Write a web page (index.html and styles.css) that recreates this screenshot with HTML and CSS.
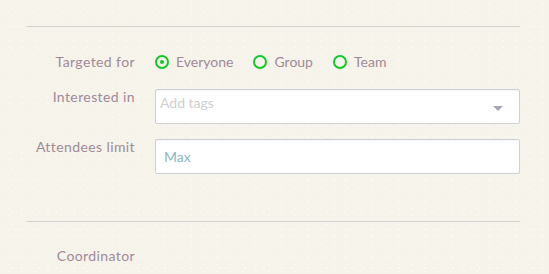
FILE: index.html
```html
<!DOCTYPE html>
<html lang="en">

<head>
  <meta charset="UTF-8">
  <meta name="viewport" content="width=device-width, initial-scale=1.0">
  <title>Event settings</title>
  <link rel="stylesheet" href="styles.css">
</head>

<body>
  <div class="page">
    <div class="divider"></div>

    <div class="form">
      <div class="row row-radios">
        <div class="label">Targeted for</div>
        <div class="options">
          <div class="option"><span class="radio checked"></span>Everyone</div>
          <div class="option"><span class="radio"></span>Group</div>
          <div class="option"><span class="radio"></span>Team</div>
        </div>
      </div>

      <div class="row">
        <div class="label">Interested in</div>
        <div class="field field-select">
          <span class="placeholder">Add tags</span>
          <span class="caret"></span>
        </div>
      </div>

      <div class="row">
        <div class="label">Attendees limit</div>
        <div class="field field-text">
          <span class="value">Max</span>
        </div>
      </div>
    </div>

    <div class="divider"></div>

    <div class="row row-coordinator">
      <div class="label">Coordinator</div>
    </div>
  </div>
</body>

</html>
```

FILE: styles.css
```css
* {
  margin: 0;
  padding: 0;
  box-sizing: border-box;
}

body {
  font-family: 'Lato', 'Open Sans', sans-serif;
  font-size: 14px;
  background-color: #f6f3eb;
  background-image:
    radial-gradient(circle at 30% 40%, rgba(255, 255, 255, 0.6) 0.5px, transparent 1px),
    radial-gradient(circle at 70% 80%, rgba(255, 255, 255, 0.5) 0.5px, transparent 1px);
  background-size: 9px 11px, 13px 7px;
  color: #a08a97;
  height: 274px;
  overflow: hidden;
}

.page {
  padding: 26px 29px 0 27px;
}

.divider {
  height: 1px;
  background: #d2d3d1;
}

.form {
  padding: 23px 0 47px;
  display: flex;
  flex-direction: column;
  gap: 15px;
}

.row {
  display: flex;
  align-items: flex-start;
  gap: 20px;
}

.label {
  width: 108px;
  flex-shrink: 0;
  text-align: right;
  line-height: 16px;
  letter-spacing: 0.4px;
  color: #a08a97;
}

.row-radios {
  height: 24px;
  align-items: center;
}

.options {
  display: flex;
  align-items: center;
  gap: 20px;
}

.option {
  display: flex;
  align-items: center;
  gap: 7px;
  line-height: 16px;
}

.radio {
  width: 14px;
  height: 14px;
  border: 2px solid #16c72a;
  border-radius: 50%;
  display: flex;
  align-items: center;
  justify-content: center;
}

.radio.checked::after {
  content: '';
  width: 4px;
  height: 4px;
  border-radius: 50%;
  background: #16c72a;
}

.field {
  flex: 1;
  height: 35px;
  background: #fff;
  border: 1px solid #cdd0d4;
  border-radius: 2px;
  box-shadow: inset 0 1px 1px rgba(0, 0, 0, 0.04);
  position: relative;
  line-height: 16px;
}

.field-select {
  padding: 5px 0 0 4px;
}

.placeholder {
  color: #cfcfd0;
}

.caret {
  position: absolute;
  right: 16px;
  top: 16px;
  width: 0;
  height: 0;
  border-left: 5px solid transparent;
  border-right: 5px solid transparent;
  border-top: 5px solid #a4a8b4;
}

.field-text {
  display: flex;
  align-items: center;
  padding-left: 8px;
}

.value {
  color: #8db6c3;
}

.row-coordinator {
  padding-top: 26px;
}
```
